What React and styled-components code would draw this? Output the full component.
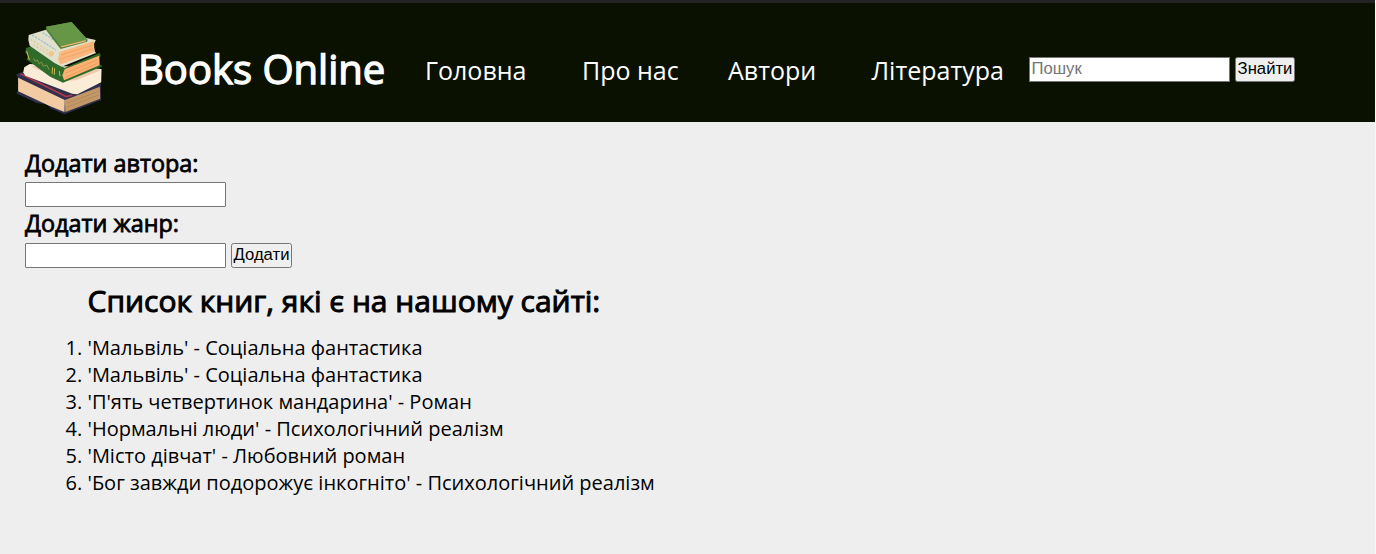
import React from 'react';
import styled, { createGlobalStyle } from 'styled-components';

const GlobalStyle = createGlobalStyle`
  * { box-sizing: border-box; }
  body {
    margin: 0;
    background: #eeeeee;
    color: #000;
    font-family: "Open Sans", "Noto Sans", sans-serif;
    font-size: 20px;
    line-height: 27px;
  }
`;

const Page = styled.div`
  height: 554px;
  overflow: hidden;
  border-right: 1px solid #f8f8f8;
`;

const Header = styled.header`
  display: flex;
  align-items: flex-start;
  height: 122px;
  padding-left: 15px;
  background: #0a1101;
  border-top: 3px solid #232324;
  color: #fff;
`;

const Logo = styled.svg`
  display: block;
  flex: none;
  width: 90px;
  height: 96px;
  margin-top: 17px;
`;

const Brand = styled.h1`
  flex: none;
  width: 287px;
  margin: 38px 0 0 33px;
  font-size: 40px;
  font-weight: 400;
  line-height: 56px;
  white-space: nowrap;
  -webkit-text-stroke: 1.3px currentColor;
`;

const Nav = styled.nav`
  display: flex;
  flex: none;
  width: 604px;
  margin-top: 50px;
`;

const NavLink = styled.a`
  flex: none;
  width: ${({ $width }) => $width}px;
  color: #fff;
  font-size: 25px;
  line-height: 34px;
  white-space: nowrap;
`;

const Field = styled.input`
  width: 201px;
  height: 25px;
  margin: 0;
  padding: 0 1.5px 2px;
  border: 1px solid #767676;
  border-radius: ${({ $square }) => ($square ? 0 : 1)}px;
  background: #fff;
  font: 16.667px/19px "Liberation Sans", Arial, sans-serif;
  &::placeholder { color: #757575; opacity: 1; }
`;

const Button = styled.button`
  width: ${({ $width }) => $width}px;
  height: 25px;
  margin: 0;
  padding: 0 0 2px;
  border: 1px solid #767676;
  border-radius: 2.5px;
  background: #efefef;
  color: #000;
  font: 16.667px/19px "Liberation Sans", Arial, sans-serif;
  white-space: nowrap;
`;

const Controls = styled.div`
  display: flex;
  gap: 5px;
  margin-top: ${({ $top }) => $top || 0}px;
`;

const Main = styled.main`
  padding: 25px 25px 0;
`;

const Label = styled.h3`
  margin: 0;
  font-size: 23.4px;
  font-weight: 400;
  line-height: 32px;
  -webkit-text-stroke: 0.8px currentColor;
`;

const ListTitle = styled.h2`
  margin: 12px 0 13px 62.5px;
  font-size: 30px;
  font-weight: 400;
  line-height: 41px;
  -webkit-text-stroke: 1px currentColor;
`;

const BookList = styled.ol`
  margin: 0;
  padding-left: 62.5px;
  font-weight: 400;
`;

const books = [
  "'Мальвіль' - Соціальна фантастика",
  "'Мальвіль' - Соціальна фантастика",
  "'П'ять четвертинок мандарина' - Роман",
  "'Нормальні люди' - Психологічний реалізм",
  "'Місто дівчат' - Любовний роман",
  "'Бог завжди подорожує інкогніто' - Психологічний реалізм",
];

function BooksLogo() {
  return (
    <Logo viewBox="48 63 264 282" aria-hidden="true">
      <path d="M51 222 L70 216 L215 278 L300 249 L301 298 L193 340 L153 323 L143 311 L112 307 L52 279 L57 270 L56 233Z" fill="#302f4e" />
      <path d="M57 233 L194 298 L193 333 L148 315 L57 272Z" fill="#f3cba2" />
      <path d="M194 298 L297 259 L298 294 L196 333Z" fill="#c39868" />
      <path d="M202 307 L292 273 M201 319 L294 283" stroke="#ad7f52" strokeWidth="2" fill="none" />
      <path d="M64 221 L198 288 L216 284" stroke="#a83945" strokeWidth="5" fill="none" />
      <path d="M75 202 L91 192 L302 207 L301 246 L231 281 L216 280 L78 227 L72 217Z" fill="#fbecd8" />
      <path d="M94 199 L196 242 L230 239 L298 211 L276 200Z" fill="#eccaaa" />
      <path d="M80 145 L96 140 L193 204 L296 160 L300 168 L296 174 L297 194 L305 199 L189 247 L151 230 L82 179 L86 169 L78 158Z" fill="#316b2c" />
      <path d="M194 207 L295 168 L296 196 L192 240 L187 225Z" fill="#fab171" />
      <path d="M195 219 L290 180 M197 231 L291 190" stroke="#e99455" strokeWidth="2" fill="none" />
      <path d="M82 154 L90 180 M158 202 L157 221 M164 205 L163 224 M178 213 L180 228" stroke="#c7b84e" strokeWidth="3" fill="none" />
      <path d="M103 176 L107 184 L113 180 L119 192 L126 187 L131 199 L141 195 L148 209" stroke="#8f9f48" strokeWidth="2.5" fill="none" />
      <path d="M88 107 L141 91 L285 122 L282 129 L278 134 L282 155 L286 160 L185 200 L164 189 L91 139 L87 122Z" fill="#e1e0cd" />
      <path d="M179 157 L280 125 L281 157 L181 194 L174 179Z" fill="#fab67b" />
      <path d="M184 165 L276 137 M183 178 L277 147" stroke="#e99d60" strokeWidth="2" fill="none" />
      <path d="M98 107 L168 151 M129 100 L177 132" stroke="#8ebac5" strokeWidth="3" strokeDasharray="7 3" fill="none" />
      <path d="M94 120 L150 156 M102 136 L157 172" stroke="#dfc795" strokeWidth="4" strokeDasharray="6 5" fill="none" />
      <circle cx="154" cy="162" r="8" fill="#efc78e" />
      <path d="M139 83 L214 69 L261 121 L260 127 L182 148 L175 140 L140 94Z" fill="#568039" />
      <path d="M139 83 L214 69 L261 121 L182 141Z" fill="#669747" />
      <path d="M180 141 L257 122 L255 126 L187 143Z" fill="#edb675" />
    </Logo>
  );
}

export default function App() {
  return (
    <Page>
      <GlobalStyle />
      <Header>
        <BooksLogo />
        <Brand>Books Online</Brand>
        <Nav>
          <NavLink $width={157}>Головна</NavLink>
          <NavLink $width={146}>Про нас</NavLink>
          <NavLink $width={143.5}>Автори</NavLink>
          <NavLink $width={157.5}>Література</NavLink>
        </Nav>
        <Controls $top={54}>
          <Field $square placeholder="Пошук" />
          <Button $width={60}>Знайти</Button>
        </Controls>
      </Header>
      <Main>
        <Label>Додати автора:</Label>
        <Controls $top={3}><Field /></Controls>
        <Label>Додати жанр:</Label>
        <Controls $top={4}>
          <Field />
          <Button $width={61}>Додати</Button>
        </Controls>
        <ListTitle>Список книг, які є на нашому сайті:</ListTitle>
        <BookList>
          {books.map((book, i) => <li key={i}>{book}</li>)}
        </BookList>
      </Main>
    </Page>
  );
}
